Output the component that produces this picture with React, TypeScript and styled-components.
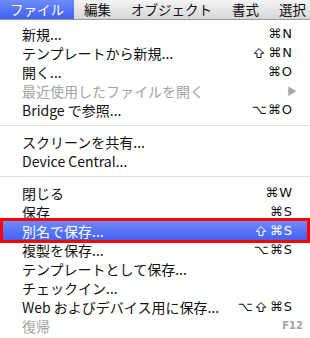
import React from 'react'
import styled, { createGlobalStyle, css } from 'styled-components'

const GlobalStyle = createGlobalStyle`
  html, body {
    margin: 0;
    padding: 0;
    background: #ffffff;
  }
  body {
    font-family: "Noto Sans CJK JP", "DejaVu Sans", sans-serif;
    -webkit-font-smoothing: antialiased;
  }
`

const Screen = styled.div`
  width: 310px;
  height: 338px;
  overflow: hidden;
  display: flex;
  flex-direction: column;
  background: #ffffff;
`

const MenuBar = styled.div`
  height: 19px;
  flex-shrink: 0;
  display: flex;
  align-items: stretch;
  background: linear-gradient(#f4f4f4, #d6d6d6);
  border-bottom: 1px solid #9a9a9a;
  overflow: hidden;
`

const BarItem = styled.div<{ $active?: boolean }>`
  flex-shrink: 0;
  display: flex;
  align-items: center;
  padding: 0 10px;
  font-size: 13.5px;
  line-height: 1;
  white-space: nowrap;
  color: #111111;
  ${props =>
    props.$active &&
    css`
      color: #ffffff;
      background: linear-gradient(#6f8bf8, #3f60f1);
    `}
`

const Menu = styled.div`
  display: flex;
  flex-direction: column;
  padding-top: 4px;
`

const Row = styled.div<{ $disabled?: boolean; $selected?: boolean }>`
  position: relative;
  height: 19px;
  flex-shrink: 0;
  display: flex;
  align-items: center;
  justify-content: space-between;
  padding: 0 17px 0 22px;
  font-size: 14px;
  line-height: 1;
  white-space: nowrap;
  color: ${props => (props.$disabled ? '#a3a3a3' : '#111111')};
  ${props =>
    props.$selected &&
    css`
      margin: 0 3px;
      padding: 0 14px 0 19px;
      color: #ffffff;
      background: linear-gradient(#7088f7, #4463f2);
      outline: 3px solid #ff0000;
      z-index: 1;
    `}
`

const Shortcut = styled.span<{ $small?: boolean }>`
  display: flex;
  align-items: center;
  gap: 1px;
  font-family: "DejaVu Sans", sans-serif;
  font-size: ${props => (props.$small ? '10px' : '13px')};
  font-weight: ${props => (props.$small ? 'bold' : 'normal')};
  letter-spacing: 1px;
  ${props =>
    props.$small &&
    css`
      margin-right: -10px;
      letter-spacing: 0;
    `}
`

const ShiftIcon = styled.svg`
  width: 12px;
  height: 12px;
  margin-right: 2px;
`

const Arrow = styled.span`
  font-size: 10px;
  color: #a8a8a8;
  margin-right: -4px;
`

const Separator = styled.div`
  height: 13px;
  flex-shrink: 0;
  display: flex;
  align-items: center;
  &::after {
    content: '';
    flex: 1;
    height: 1px;
    background: #e2e2e2;
  }
`

type Item = {
  label?: string
  shortcut?: string
  disabled?: boolean
  selected?: boolean
  submenu?: boolean
  small?: boolean
  separator?: boolean
}

const items: Item[] = [
  { label: '新規...', shortcut: '⌘N' },
  { label: 'テンプレートから新規...', shortcut: '⇧⌘N' },
  { label: '開く...', shortcut: '⌘O' },
  { label: '最近使用したファイルを開く', disabled: true, submenu: true },
  { label: 'Bridge で参照...', shortcut: '⌥⌘O' },
  { separator: true },
  { label: 'スクリーンを共有...' },
  { label: 'Device Central...' },
  { separator: true },
  { label: '閉じる', shortcut: '⌘W' },
  { label: '保存', shortcut: '⌘S' },
  { label: '別名で保存...', shortcut: '⇧⌘S', selected: true },
  { label: '複製を保存...', shortcut: '⌥⌘S' },
  { label: 'テンプレートとして保存...' },
  { label: 'チェックイン...' },
  { label: 'Web およびデバイス用に保存...', shortcut: '⌥⇧⌘S' },
  { label: '復帰', shortcut: 'F12', disabled: true, small: true },
]

const barItems = ['ファイル', '編集', 'オブジェクト', '書式', '選択']

function Keys({ value, small }: { value: string; small?: boolean }) {
  const parts = value.split('⇧')
  return (
    <Shortcut $small={small}>
      {parts.map((part, i) => (
        <React.Fragment key={i}>
          {i > 0 && (
            <ShiftIcon viewBox="0 0 12 12" aria-label="⇧">
              <path
                d="M6 1.5 L10.8 6.3 H8 V10.5 H4 V6.3 H1.2 Z"
                fill="none"
                stroke="currentColor"
                strokeWidth="1"
                strokeLinejoin="miter"
              />
            </ShiftIcon>
          )}
          {part && <span>{part}</span>}
        </React.Fragment>
      ))}
    </Shortcut>
  )
}

export default function App() {
  return (
    <Screen>
      <GlobalStyle />
      <MenuBar>
        {barItems.map((name, i) => (
          <BarItem key={name} $active={i === 0}>
            {name}
          </BarItem>
        ))}
      </MenuBar>
      <Menu>
        {items.map((item, i) =>
          item.separator ? (
            <Separator key={i} />
          ) : (
            <Row key={i} $disabled={item.disabled} $selected={item.selected}>
              <span>{item.label}</span>
              {item.submenu && <Arrow>▶</Arrow>}
              {item.shortcut && <Keys value={item.shortcut} small={item.small} />}
            </Row>
          )
        )}
      </Menu>
    </Screen>
  )
}
